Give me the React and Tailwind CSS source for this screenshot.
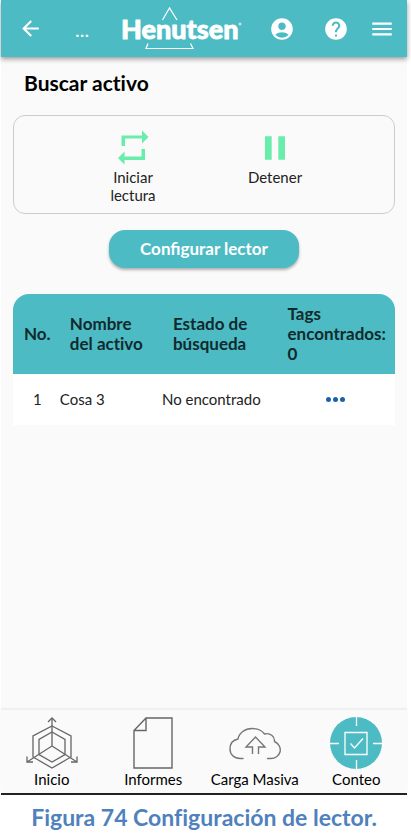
import { MdArrowBack, MdAccountCircle, MdHelp, MdMenu, MdPause } from "react-icons/md";

function Logo() {
  return (
    <a href="#inicio" aria-label="Henutsen" className="ml-8 block">
      <svg viewBox="0 0 122 57" className="h-[57px] w-[122px]" fill="none" stroke="#fff" strokeWidth="1.2">
        <path d="M41.500 20 48.500 8 56 20" />
        <path d="M27 43.500 25 48.500H72L69.500 43.500" />
        <text x="0" y="39" fill="#fff" stroke="#fff" strokeWidth="0.8" strokeLinejoin="round" fontSize="27" fontWeight="900" fontFamily="Lato, sans-serif">
          Henutsen
        </text>
        <circle cx="119" cy="24" r="1" strokeWidth="0.8" />
      </svg>
    </a>
  );
}

function Header() {
  return (
    <header className="relative flex h-[57px] items-center bg-[#4dbbc4] pr-3 pl-[17px] text-white shadow-[0_2px_5px_rgba(0,0,0,0.4)]">
      <button aria-label="Volver"><MdArrowBack size={25} /></button>
      <span className="ml-8 text-xl leading-5">...</span>
      <Logo />
      <div className="ml-auto flex items-center">
        <button aria-label="Cuenta" className="mr-7"><MdAccountCircle size={26} /></button>
        <button aria-label="Ayuda" className="mr-5"><MdHelp size={26} /></button>
        <button aria-label="Menú"><MdMenu size={26} /></button>
      </div>
    </header>
  );
}

function RepeatIcon() {
  return (
    <svg viewBox="0 0 40 40" className="size-10" fill="#69edab">
      <path d="M8.500 18V7.500H29V2.500L35.500 9 29 15.500V10.500H12V18ZM32 21V32H11.500V36.500L5 30 11.500 23.500V28.500H28.500V21Z" />
    </svg>
  );
}

function InicioIcon() {
  return (
    <svg viewBox="0 0 52 52" className="size-[52px]" fill="none" stroke="#666" strokeWidth="1.3">
      <path d="M26 9 45 19V40L26 51 7 40V19Z" />
      <path d="M26 15 39 22.500V37.500L26 45 13 37.500V22.500Z" />
      <path d="M26 1V29L1 45M26 29 51 45" />
      <path d="M22 5 26 1 30 5M1 39.500V45H7M51 39.500V45H45" />
    </svg>
  );
}

function InformesIcon() {
  return (
    <svg viewBox="0 0 52 52" className="size-[52px]" fill="none" stroke="#666" strokeWidth="1.4">
      <path d="M19 1H45V51H7V13.500ZM19 1V13.500H7" />
    </svg>
  );
}

function CargaIcon() {
  return (
    <svg viewBox="0 0 52 52" className="size-[52px]" fill="none" stroke="#777" strokeWidth="1.4" strokeLinecap="round">
      <path d="M14 41.500H11C5 41.500 1 37.500 1 32C1 27 4 23 9 22C10 16 16 11.500 23 11.500C29 11.500 33 13.500 35.500 17C41 15.500 46 19.500 45.500 24.500C50 26.500 52 31 51 35C50 39 46 41.500 42 41.500H38.500" />
      <path strokeLinecap="butt" d="M23.500 37V30H17L26.500 20 36 30H29.500V37" />
    </svg>
  );
}

function ConteoIcon() {
  return (
    <svg viewBox="0 0 52 52" className="size-[52px]" fill="none" stroke="#fff" strokeWidth="1.3">
      <circle cx="26" cy="26" r="26" fill="#4dbbc4" stroke="none" />
      <path d="M26.500 0V9M26.500 43V52M0 26.500H9M43 26.500H52" />
      <path d="M15 15.500H37V37.500H15ZM20.500 26.500 24.500 31 33 21.500" />
    </svg>
  );
}

const tabs = [
  { label: "Inicio", Icon: InicioIcon },
  { label: "Informes", Icon: InformesIcon },
  { label: "Carga Masiva", Icon: CargaIcon },
  { label: "Conteo", Icon: ConteoIcon },
];

export default function App() {
  return (
    <div className="flex min-h-screen flex-col bg-white pr-1 pl-px font-[Lato,sans-serif] text-[#222]">
      <div className="flex flex-1 flex-col border-b-2 border-[#222] bg-[#fafafa]">
        <Header />
        <main className="flex-1 px-3">
          <h1 className="mt-3 ml-[11px] text-[21px] leading-7 font-bold text-black [font-variant-ligatures:none]">Buscar activo</h1>

          <section className="mt-[18px] grid h-[99px] grid-cols-2 rounded-xl border border-[#ccc] px-12 pt-3">
            <button className="flex flex-col items-center text-[15px] leading-[18px]">
              <RepeatIcon />
              <span className="w-14">Iniciar lectura</span>
            </button>
            <button className="flex flex-col items-center text-[15px] leading-[18px]">
              <MdPause size={40} color="#69edab" />
              <span>Detener</span>
            </button>
          </section>

          <button className="mx-auto mt-4 block h-[38px] rounded-2xl bg-[#4dbbc4] px-[31px] text-[17px] font-bold text-white shadow-[0_2px_3px_rgba(0,0,0,0.3)]">
            Configurar lector
          </button>

          <table className="mt-[26px] w-full table-fixed text-left text-[15px]">
            <colgroup>
              <col className="w-[12%]" />
              <col className="w-[27%]" />
              <col className="w-[30%]" />
              <col className="w-[31%]" />
            </colgroup>
            <thead className="text-[17px] leading-5 text-[#102a2d] [font-variant-ligatures:none]">
              <tr className="h-20">
                <th className="rounded-tl-2xl bg-[#4dbbc4] pl-[11px]">No.</th>
                <th className="bg-[#4dbbc4] pl-[11px]">Nombre<br />del activo</th>
                <th className="bg-[#4dbbc4] pl-[11px]">Estado de búsqueda</th>
                <th className="rounded-tr-2xl bg-[#4dbbc4] pl-[11px]">Tags encontrados: 0</th>
              </tr>
            </thead>
            <tbody>
              <tr className="h-[51px] bg-white">
                <td className="pl-[3px] text-center">1</td>
                <td className="pl-px">Cosa 3</td>
                <td>No encontrado</td>
                <td className="text-center">
                  <button aria-label="Opciones" className="inline-flex gap-[2px] pb-1 align-middle">
                    <span className="size-[5px] rounded-full bg-[#1b62ab]" />
                    <span className="size-[5px] rounded-full bg-[#1b62ab]" />
                    <span className="size-[5px] rounded-full bg-[#1b62ab]" />
                  </button>
                </td>
              </tr>
            </tbody>
          </table>
        </main>

        <nav className="grid grid-cols-4 border-t border-[#eee] pt-[7px] pb-1 shadow-[0_-1px_2px_rgba(0,0,0,0.05)]">
          {tabs.map(({ label, Icon }) => (
            <a key={label} href={"#" + label} className="flex flex-col items-center text-[15px] leading-5 text-black">
              <Icon />
              <span>{label}</span>
            </a>
          ))}
        </nav>
      </div>
      <p className="flex h-10 items-center justify-center pt-1 text-[23px] leading-7 font-bold whitespace-nowrap text-[#4f81bd] [font-variant-ligatures:none]">
        Figura 74 Configuración de lector.
      </p>
    </div>
  );
}
